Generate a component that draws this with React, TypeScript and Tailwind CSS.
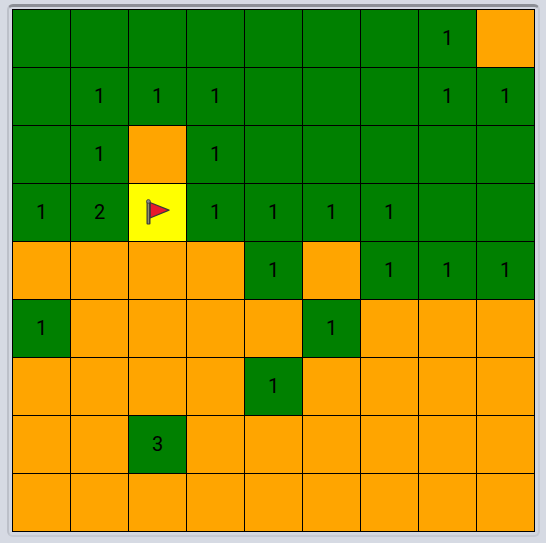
const rows = [
  ["g", "g", "g", "g", "g", "g", "g", "1", "o"],
  ["g", "1", "1", "1", "g", "g", "g", "1", "1"],
  ["g", "1", "o", "1", "g", "g", "g", "g", "g"],
  ["1", "2", "f", "1", "1", "1", "1", "g", "g"],
  ["o", "o", "o", "o", "1", "o", "1", "1", "1"],
  ["1", "o", "o", "o", "o", "1", "o", "o", "o"],
  ["o", "o", "o", "o", "1", "o", "o", "o", "o"],
  ["o", "o", "3", "o", "o", "o", "o", "o", "o"],
  ["o", "o", "o", "o", "o", "o", "o", "o", "o"],
];

function Flag() {
  return (
    <svg width="26" height="28" viewBox="0 0 26 28">
      <path d="M5 4.5 L24 12.2 L5 20 Z" fill="#e8192c" stroke="#3a3a3a" strokeWidth="1.3" strokeLinejoin="round" />
      <rect x="1.5" y="3" width="4" height="23.5" rx="1" fill="#3a3a3a" />
      <rect x="2.7" y="3.5" width="1.4" height="22" fill="#8f8f6f" />
      <circle cx="3.4" cy="3.4" r="1.9" fill="#8a8a8a" stroke="#333333" strokeWidth="0.7" />
    </svg>
  );
}

function Cell({ value }: { value: string }) {
  const isOrange = value === "o";
  const isFlag = value === "f";
  const bg = isFlag ? "bg-[#ffff00]" : isOrange ? "bg-[#ffa500]" : "bg-[#008000]";
  return (
    <div className={`w-[58px] h-[58px] border-r border-b border-black flex items-center justify-center pb-[2px] text-[20px] text-black ${bg}`}>
      {isFlag ? <Flag /> : value === "g" || isOrange ? "" : value}
    </div>
  );
}

export default function App() {
  return (
    <div className="w-[546px] h-[543px] bg-[#d6dae3] pt-[4px] pl-[7px] font-['Roboto',sans-serif]">
      <div className="w-[533px] h-[533px] rounded-[6px] bg-[#d3d7e0] border-t-[3px] border-l-[2px] border-r-[2px] border-b-[2px] border-t-[#8c8f96] border-l-[#bcc0c9] border-r-[#c6cad3] border-b-[#c6cad3] pt-[2px] pl-[3px]">
        <div className="grid grid-cols-[repeat(9,58px)] w-[523px] border-t border-l border-black">
          {rows.flat().map((value, i) => (
            <Cell key={i} value={value} />
          ))}
        </div>
      </div>
    </div>
  );
}
